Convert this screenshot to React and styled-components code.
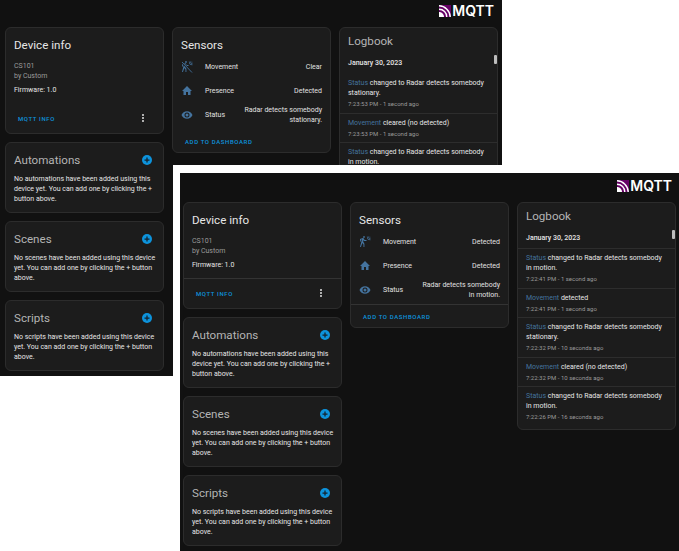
import React from "react";
import styled, { createGlobalStyle } from "styled-components";

const Global = createGlobalStyle`
  html, body { margin: 0; padding: 0; background: #fff; }
  body { width: 679px; height: 551px; overflow: hidden; font-family: Roboto, "Liberation Sans", sans-serif; }
`;

const Desktop = styled.div`
  position: relative;
  width: 679px;
  height: 551px;
  overflow: hidden;
  background: #fff;
`;

const Window = styled.section`
  position: absolute;
  left: ${p => p.$x}px;
  top: ${p => p.$y}px;
  width: ${p => p.$w}px;
  height: ${p => p.$h}px;
  box-sizing: border-box;
  background: #111111;
  border-style: solid;
  border-color: #fff;
  border-width: ${p => p.$framed ? "8px 0 0 7px" : "0"};
  padding: ${p => p.$framed ? "7px 3px 0 3px" : "5px 4px 0 5px"};
  overflow: hidden;
`;

const Brand = styled.div`
  display: flex;
  justify-content: flex-end;
  align-items: center;
  height: 12px;
  padding-right: 4px;
  color: #fff;
  font-family: Inter, "Liberation Sans", sans-serif;
  font-weight: 600;
  font-size: 14px;
  line-height: 12px;
`;

const Mark = styled.svg`
  width: 12px;
  height: 12px;
  margin-right: 1px;
  flex: none;
`;

const Columns = styled.div`
  display: grid;
  grid-template-columns: repeat(3, 159px);
  column-gap: 8px;
  margin-top: 10px;
  align-items: start;
`;

const Stack = styled.div`
  display: flex;
  flex-direction: column;
  gap: 8px;
`;

const Card = styled.article`
  box-sizing: border-box;
  background: #1c1c1c;
  border: 1px solid #2c2c2c;
  border-radius: 6px;
  color: #e1e1e1;
  overflow: hidden;
`;

const Title = styled.h2`
  margin: 0;
  font-weight: 400;
  font-size: 11.6px;
  line-height: 14px;
  color: ${p => p.$dim ? "#b4b4b4" : "#e6e6e6"};
`;

const TitleRow = styled.div`
  display: flex;
  justify-content: space-between;
  align-items: center;
  padding: ${p => p.$top ?? 10}px 8px 0 8px;
`;

const InfoBody = styled.div`
  padding: 9px 8px 8px 8px;
`;

const Muted = styled.div`
  font-size: 7px;
  line-height: 10px;
  color: #9b9b9b;
`;

const Line = styled.div`
  font-size: 7px;
  line-height: 10px;
  color: #e6e6e6;
  margin-top: 4px;
`;

const Actions = styled.div`
  display: flex;
  justify-content: space-between;
  align-items: center;
  height: ${p => p.$h}px;
  padding: 0 14px 0 12px;
  border-top: 1px solid ${p => p.$line ? "#333333" : "transparent"};
`;

const ActionLink = styled.span`
  color: #0d93dc;
  font-size: 6px;
  font-weight: 500;
  letter-spacing: 0.62px;
  text-transform: uppercase;
`;

const Kebab = styled.svg`
  width: 12px;
  height: 12px;
  fill: #e1e1e1;
`;

const Rows = styled.div`
  display: flex;
  flex-direction: column;
  padding: 3px 8px 2px 8px;
`;

const SensorRow = styled.div`
  display: grid;
  grid-template-columns: 24px 1fr auto;
  align-items: center;
  height: 24px;
  font-size: 7px;
  line-height: 10px;
`;

const SensorIcon = styled.svg`
  width: 12px;
  height: 12px;
  fill: #44739e;
`;

const SensorValue = styled.div`
  text-align: right;
  max-width: 82px;
`;

const Note = styled.p`
  margin: 0;
  padding: 7px 4px 8px 8px;
  font-size: 7px;
  line-height: 10px;
  color: #e6e6e6;
`;

const Plus = styled.svg`
  width: 10px;
  height: 10px;
  margin-right: 3px;
`;

const LogList = styled.div`
  position: relative;
  padding-bottom: 3px;
`;

const LogDate = styled.div`
  padding: 10px 8px 5px 8px;
  font-size: 7px;
  line-height: 10px;
  font-weight: 500;
  color: #e6e6e6;
`;

const Thumb = styled.div`
  position: absolute;
  top: 7px;
  right: 0;
  width: 3px;
  height: 9px;
  background: #bdbdbd;
  border-radius: 1px;
`;

const LogEntry = styled.div`
  padding: 4px 12px 3.6px 8px;
  border-top: 1px solid ${p => p.$line ? "#2d2d2d" : "transparent"};
`;

const LogText = styled.div`
  font-size: 7px;
  line-height: 10px;
  color: #e6e6e6;
`;

const LogEntity = styled.span`
  color: #44739e;
`;

const LogTime = styled.div`
  font-size: 6px;
  line-height: 10px;
  padding-top: 1px;
  color: #9b9b9b;
`;

const HOME = "M10,20V14H14V20H19V12H22L12,2L2,12H5V20H10Z";
const EYE = "M12,9A3,3 0 0,0 9,12A3,3 0 0,0 12,15A3,3 0 0,0 15,12A3,3 0 0,0 12,9M12,17A5,5 0 0,1 7,12A5,5 0 0,1 12,7A5,5 0 0,1 17,12A5,5 0 0,1 12,17M12,4.5C7,4.5 2.73,7.61 1,12C2.73,16.39 7,19.5 12,19.5C17,19.5 21.27,16.39 23,12C21.27,7.61 17,4.5 12,4.5Z";
const MOTION = "M10,0.2C9,0.2 8.2,1 8.2,2C8.2,3 9,3.8 10,3.8C11,3.8 11.8,3 11.8,2C11.8,1 11,0.2 10,0.2M15.67,1A7.33,7.33 0 0,0 23,8.33V7A6,6 0 0,1 17,1H15.67M18.33,1C18.33,3.58 20.42,5.67 23,5.67V4.33C21.16,4.33 19.67,2.84 19.67,1H18.33M21,1A2,2 0 0,0 23,3A2,2 0 0,0 21,1M7.92,4.03C7.75,4.03 7.58,4.06 7.42,4.11L2,5.8V11H3.8V7.33L5.91,6.67L2,22H3.8L6.67,13.89L9,17V22H10.8V15.59L8.31,11.05L9.04,8.18L10.12,10H15V8.2H11.38L9.38,4.87C9.08,4.37 8.54,4.03 7.92,4.03Z";
const KEBAB = "M12,16A2,2 0 0,1 14,18A2,2 0 0,1 12,20A2,2 0 0,1 10,18A2,2 0 0,1 12,16M12,10A2,2 0 0,1 14,12A2,2 0 0,1 12,14A2,2 0 0,1 10,12A2,2 0 0,1 12,10M12,4A2,2 0 0,1 14,6A2,2 0 0,1 12,8A2,2 0 0,1 10,6A2,2 0 0,1 12,4Z";

const MdiIcon = ({ d }) => (
  <SensorIcon viewBox="0 0 24 24"><path d={d} /></SensorIcon>
);

const MotionIcon = ({ off }) => (
  <SensorIcon viewBox="0 0 24 24">
    <path d={MOTION} />
    {off && <path d="M2 3L22 22" stroke="#1c1c1c" strokeWidth="3.6" />}
    {off && <path d="M2 2L22 23" stroke="#44739e" strokeWidth="1.8" />}
  </SensorIcon>
);

const PlusIcon = () => (
  <Plus viewBox="0 0 24 24">
    <circle cx="12" cy="12" r="12" fill="#0d93dc" />
    <path d="M12 6v12M6 12h12" stroke="#14212b" strokeWidth="3" />
  </Plus>
);

const LogoMark = () => (
  <Mark viewBox="0 0 12 12">
    <rect width="12" height="12" fill="#660066" />
    <g fill="none" stroke="#fff" strokeWidth="1.4">
      <path d="M0 .8C6 .8 11.2 6 11.2 12" />
      <path d="M0 4.2C4.4 4.2 7.8 7.6 7.8 12" />
    </g>
    <path d="M0 7C2.8 7 5 9.2 5 12H0Z" fill="#fff" />
  </Mark>
);

const LogLines = ({ items }) => items.map((it, i) => (
  <LogEntry key={i} $line={it.line}>
    <LogText><LogEntity>{it.name}</LogEntity> {it.text}</LogText>
    <LogTime>{it.time}</LogTime>
  </LogEntry>
));

const EmptyCard = ({ title, text }) => (
  <Card>
    <TitleRow><Title $dim>{title}</Title><PlusIcon /></TitleRow>
    <Note>{text}</Note>
  </Card>
);

const Dashboard = ({ framed, motion, motionOff, status, actionsLine, logs, x, y, w, h }) => (
  <Window $framed={framed} $x={x} $y={y} $w={w} $h={h}>
    <Brand><LogoMark />MQTT</Brand>
    <Columns>
      <Stack>
        <Card>
          <TitleRow><Title>Device info</Title></TitleRow>
          <InfoBody>
            <Muted>CS101</Muted>
            <Muted>by Custom</Muted>
            <Line>Firmware: 1.0</Line>
          </InfoBody>
          <Actions $h={28.5} $line={actionsLine}>
            <ActionLink>MQTT Info</ActionLink>
            <Kebab viewBox="0 0 24 24"><path d={KEBAB} /></Kebab>
          </Actions>
        </Card>
        <EmptyCard title="Automations" text="No automations have been added using this device yet. You can add one by clicking the + button above." />
        <EmptyCard title="Scenes" text="No scenes have been added using this device yet. You can add one by clicking the + button above." />
        <EmptyCard title="Scripts" text="No scripts have been added using this device yet. You can add one by clicking the + button above." />
      </Stack>
      <Card>
        <TitleRow><Title>Sensors</Title></TitleRow>
        <Rows>
          <SensorRow><MotionIcon off={motionOff} /><span>Movement</span><SensorValue>{motion}</SensorValue></SensorRow>
          <SensorRow><MdiIcon d={HOME} /><span>Presence</span><SensorValue>Detected</SensorValue></SensorRow>
          <SensorRow><MdiIcon d={EYE} /><span>Status</span><SensorValue>{status}</SensorValue></SensorRow>
        </Rows>
        <Actions $h={22} $line={actionsLine}>
          <ActionLink>Add to dashboard</ActionLink>
        </Actions>
      </Card>
      <Card>
        <TitleRow $top={6}><Title $dim>Logbook</Title></TitleRow>
        <LogList>
          <Thumb />
          <LogDate>January 30, 2023</LogDate>
          <LogLines items={logs} />
        </LogList>
      </Card>
    </Columns>
  </Window>
);

const logsA = [
  { name: "Status", text: "changed to Radar detects somebody stationary.", time: "7:23:53 PM - 1 second ago" },
  { name: "Movement", text: "cleared (no detected)", time: "7:23:53 PM - 1 second ago", line: true },
  { name: "Status", text: "changed to Radar detects somebody in motion.", time: "7:22:41 PM - 1 minute ago", line: true },
];
const logsB = [
  { name: "Status", text: "changed to Radar detects somebody in motion.", time: "7:22:41 PM - 1 second ago", line: true },
  { name: "Movement", text: "detected", time: "7:22:41 PM - 1 second ago", line: true },
  { name: "Status", text: "changed to Radar detects somebody stationary.", time: "7:22:32 PM - 10 seconds ago", line: true },
  { name: "Movement", text: "cleared (no detected)", time: "7:22:32 PM - 10 seconds ago", line: true },
  { name: "Status", text: "changed to Radar detects somebody in motion.", time: "7:22:26 PM - 16 seconds ago", line: true },
];

export default function App() {
  return (
    <Desktop>
      <Global />
      <Dashboard x={0} y={0} w={502} h={376} motion="Clear" motionOff status="Radar detects somebody stationary." logs={logsA} />
      <Dashboard framed x={173} y={165} w={506} h={386} motion="Detected" status="Radar detects somebody in motion." actionsLine logs={logsB} />
    </Desktop>
  );
}
